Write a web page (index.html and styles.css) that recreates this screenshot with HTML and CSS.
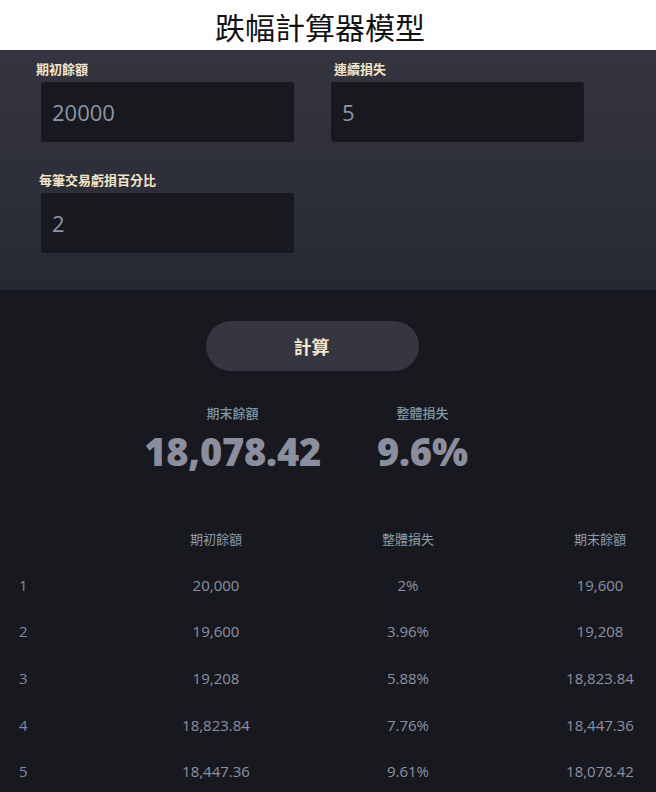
FILE: index.html
```html
<!DOCTYPE html>
<html lang="zh-Hant">
<head>
<meta charset="utf-8">
<title>跌幅計算器模型</title>
<link rel="stylesheet" href="styles.css">
</head>
<body>
<header class="title">跌幅計算器模型</header>
<section class="panel">
  <div class="fields">
    <div class="field">
      <label class="label label-a">期初餘額</label>
      <input class="input" type="text" value="20000">
    </div>
    <div class="field">
      <label class="label label-b">連續損失</label>
      <input class="input" type="text" value="5">
    </div>
    <div class="field">
      <label class="label label-c">每筆交易虧損百分比</label>
      <input class="input" type="text" value="2">
    </div>
  </div>
</section>
<main class="results">
  <div class="actions">
    <button class="btn" type="button">計算</button>
  </div>
  <div class="stats">
    <div class="stat">
      <div class="stat-label">期末餘額</div>
      <div class="stat-value">18,078.42</div>
    </div>
    <div class="stat">
      <div class="stat-label">整體損失</div>
      <div class="stat-value">9.6%</div>
    </div>
  </div>
  <div class="table">
    <div class="row head">
      <div class="c idx"></div>
      <div class="c">期初餘額</div>
      <div class="c">整體損失</div>
      <div class="c end">期末餘額</div>
    </div>
    <div class="row">
      <div class="c idx">1</div><div class="c">20,000</div><div class="c">2%</div><div class="c end">19,600</div>
    </div>
    <div class="row">
      <div class="c idx">2</div><div class="c">19,600</div><div class="c">3.96%</div><div class="c end">19,208</div>
    </div>
    <div class="row">
      <div class="c idx">3</div><div class="c">19,208</div><div class="c">5.88%</div><div class="c end">18,823.84</div>
    </div>
    <div class="row">
      <div class="c idx">4</div><div class="c">18,823.84</div><div class="c">7.76%</div><div class="c end">18,447.36</div>
    </div>
    <div class="row">
      <div class="c idx">5</div><div class="c">18,447.36</div><div class="c">9.61%</div><div class="c end">18,078.42</div>
    </div>
  </div>
</main>
</body>
</html>
```
FILE: styles.css
```css
* { box-sizing: border-box; }
html, body {
  margin: 0;
  padding: 0;
  background: #17191e;
  font-family: "Open Sans", "Noto Sans CJK TC", sans-serif;
}
body { overflow: hidden; height: 792px; }

.title {
  height: 50px;
  line-height: 52px;
  background: #ffffff;
  color: #111111;
  text-align: center;
  padding-right: 16px;
  font-family: "Noto Sans CJK TC", sans-serif;
  font-size: 30px;
  font-weight: 400;
}

.panel {
  background: linear-gradient(180deg, #35353f 0%, #262934 100%);
  padding: 10px 0 37px 41px;
}
.fields {
  display: grid;
  grid-template-columns: 253px 253px;
  column-gap: 37px;
  row-gap: 29px;
}
.field { display: flex; flex-direction: column; }
.label {
  font-family: "Noto Sans CJK TC", sans-serif;
  font-size: 13px;
  font-weight: 700;
  line-height: 18px;
  color: #f3e4c6;
  margin-bottom: 4px;
}
.label-a { margin-left: -5px; }
.label-b { margin-left: 3px; }
.label-c { margin-left: -2px; }
.input {
  height: 60px;
  width: 253px;
  border: none;
  border-radius: 3px;
  background: #17191e;
  color: #8b95a8;
  font-family: "Open Sans", sans-serif;
  font-size: 22px;
  padding: 0 11px;
  outline: none;
}

.results { padding-top: 31px; }
.actions { display: flex; padding-left: 206px; }
.btn {
  width: 213px;
  height: 50px;
  border: none;
  border-radius: 25px;
  background: #363642;
  color: #f5e6cc;
  font-family: "Noto Sans CJK TC", sans-serif;
  font-size: 18px;
  font-weight: 700;
  padding: 0;
  text-indent: -2px;
}

.stats {
  display: flex;
  justify-content: center;
  gap: 56px;
  padding-right: 44px;
  margin-top: 33px;
}
.stat { display: flex; flex-direction: column; align-items: center; }
.stat-label {
  font-family: "Noto Sans CJK TC", sans-serif;
  font-size: 13px;
  line-height: 18px;
  color: #7f96a4;
  font-weight: 500;
}
.stat-value {
  margin-top: 7px;
  font-size: 38px;
  line-height: 44px;
  font-weight: 800;
  color: #8b8e9e;
  letter-spacing: -0.2px;
}

.table { margin-top: 42px; }
.row {
  display: grid;
  grid-template-columns: 120px 192px 192px 152px;
  height: 46.6px;
  align-items: center;
  font-size: 15px;
  color: #8a92a5;
}
.c { text-align: center; white-space: nowrap; }
.c.idx { text-align: left; padding-left: 19px; color: #7c8ba3; }
.c.end { padding-left: 40px; }
.head .c {
  font-family: "Noto Sans CJK TC", sans-serif;
  font-size: 13px;
  color: #8d9ca9;
}
```
